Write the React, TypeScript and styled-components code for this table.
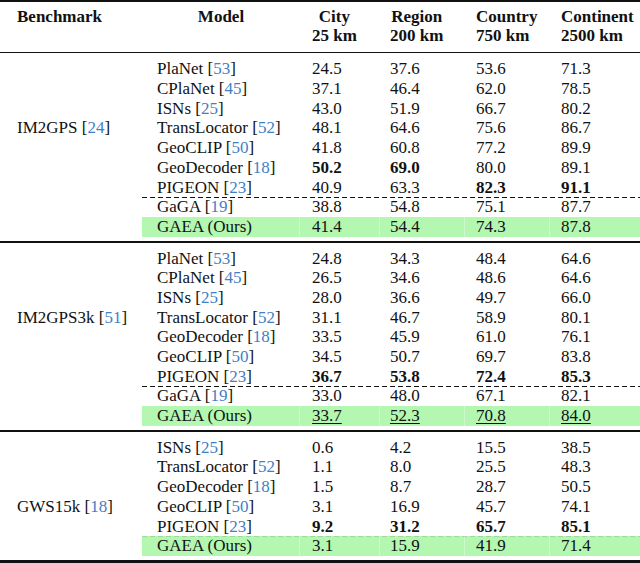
import React from 'react';
import styled, { createGlobalStyle } from 'styled-components';

const GlobalStyle = createGlobalStyle`
  body {
    margin: 0;
    background: #ffffff;
  }
`;

interface ModelRow {
  model: string;
  cite?: string;
  values: string[];
  bold?: boolean[];
  underline?: boolean;
  highlight?: boolean;
  dashed?: boolean;
  faintDash?: boolean;
}

interface Section {
  name: string;
  cite: string;
  labelRow: number;
  rows: ModelRow[];
}

const ALL = [true, true, true, true];
const FIRST_TWO = [true, true, false, false];
const LAST_TWO = [false, false, true, true];

const sections: Section[] = [
  {
    name: 'IM2GPS',
    cite: '24',
    labelRow: 3,
    rows: [
      { model: 'PlaNet', cite: '53', values: ['24.5', '37.6', '53.6', '71.3'] },
      { model: 'CPlaNet', cite: '45', values: ['37.1', '46.4', '62.0', '78.5'] },
      { model: 'ISNs', cite: '25', values: ['43.0', '51.9', '66.7', '80.2'] },
      { model: 'TransLocator', cite: '52', values: ['48.1', '64.6', '75.6', '86.7'] },
      { model: 'GeoCLIP', cite: '50', values: ['41.8', '60.8', '77.2', '89.9'] },
      { model: 'GeoDecoder', cite: '18', values: ['50.2', '69.0', '80.0', '89.1'], bold: FIRST_TWO },
      { model: 'PIGEON', cite: '23', values: ['40.9', '63.3', '82.3', '91.1'], bold: LAST_TWO },
      { model: 'GaGA', cite: '19', values: ['38.8', '54.8', '75.1', '87.7'], dashed: true },
      { model: 'GAEA (Ours)', values: ['41.4', '54.4', '74.3', '87.8'], highlight: true },
    ],
  },
  {
    name: 'IM2GPS3k',
    cite: '51',
    labelRow: 3,
    rows: [
      { model: 'PlaNet', cite: '53', values: ['24.8', '34.3', '48.4', '64.6'] },
      { model: 'CPlaNet', cite: '45', values: ['26.5', '34.6', '48.6', '64.6'] },
      { model: 'ISNs', cite: '25', values: ['28.0', '36.6', '49.7', '66.0'] },
      { model: 'TransLocator', cite: '52', values: ['31.1', '46.7', '58.9', '80.1'] },
      { model: 'GeoDecoder', cite: '18', values: ['33.5', '45.9', '61.0', '76.1'] },
      { model: 'GeoCLIP', cite: '50', values: ['34.5', '50.7', '69.7', '83.8'] },
      { model: 'PIGEON', cite: '23', values: ['36.7', '53.8', '72.4', '85.3'], bold: ALL },
      { model: 'GaGA', cite: '19', values: ['33.0', '48.0', '67.1', '82.1'], dashed: true },
      { model: 'GAEA (Ours)', values: ['33.7', '52.3', '70.8', '84.0'], highlight: true, underline: true },
    ],
  },
  {
    name: 'GWS15k',
    cite: '18',
    labelRow: 3,
    rows: [
      { model: 'ISNs', cite: '25', values: ['0.6', '4.2', '15.5', '38.5'] },
      { model: 'TransLocator', cite: '52', values: ['1.1', '8.0', '25.5', '48.3'] },
      { model: 'GeoDecoder', cite: '18', values: ['1.5', '8.7', '28.7', '50.5'] },
      { model: 'GeoCLIP', cite: '50', values: ['3.1', '16.9', '45.7', '74.1'] },
      { model: 'PIGEON', cite: '23', values: ['9.2', '31.2', '65.7', '85.1'], bold: ALL },
      { model: 'GAEA (Ours)', values: ['3.1', '15.9', '41.9', '71.4'], highlight: true, faintDash: true },
    ],
  },
];

// header of the four accuracy columns
const columns = [
  { title: 'City', unit: '25 km', pad: 12, align: 'center' },
  { title: 'Region', unit: '200 km', pad: 10, align: 'center' },
  { title: 'Country', unit: '750 km', pad: 11, align: 'flex-start' },
  { title: 'Continent', unit: '2500 km', pad: 11, align: 'flex-start' },
];

const COLS = '158px 80px 85px 85px 90px';

const Table = styled.div`
  width: 640px;
  font-family: 'Liberation Serif', Tinos, 'Times New Roman', 'DejaVu Serif', serif;
  font-size: 17px;
  line-height: 19.7px;
  color: #111;
`;

const Rule = styled.div<{ $h: number }>`
  height: ${(p) => p.$h}px;
  background: #111;
`;

const HeaderRow = styled.div`
  display: grid;
  grid-template-columns: 142px ${COLS};
  padding: 5px 0 6px;
  font-weight: 700;
`;

const HeadBench = styled.div`
  padding-left: 17px;
`;

const HeadModel = styled.div`
  text-align: center;
`;

const HeadNum = styled.div<{ $pad: number; $align: string }>`
  padding-left: ${(p) => p.$pad}px;
  display: flex;
  flex-direction: column;
  align-items: ${(p) => p.$align};
  width: max-content;
`;

const SectionBody = styled.div`
  padding: 6px 0 4px;
`;

const Row = styled.div`
  display: grid;
  grid-template-columns: 142px 1fr;
  height: 19.7px;
`;

const BenchCell = styled.div`
  padding-left: 17px;
  white-space: nowrap;
`;

const Cells = styled.div<{ $highlight?: boolean; $dashed?: boolean; $faint?: boolean }>`
  position: relative;
  display: grid;
  grid-template-columns: ${COLS};
  background: ${(p) => (p.$highlight ? '#b3f7b1' : 'transparent')};

  &::before {
    content: '';
    display: ${(p) => (p.$dashed || p.$faint ? 'block' : 'none')};
    position: absolute;
    left: 0;
    right: 0;
    top: 0;
    height: 1px;
    background: repeating-linear-gradient(
      to right,
      ${(p) => (p.$faint ? 'rgba(0, 0, 0, 0.12)' : '#111')} 0 5px,
      transparent 5px 8px
    );
  }
`;

const ModelCell = styled.div`
  padding-left: 15px;
  white-space: nowrap;
`;

const NumCell = styled.div<{ $pad: number; $bold?: boolean; $underline?: boolean; $highlight?: boolean }>`
  padding-left: ${(p) => p.$pad}px;
  font-weight: ${(p) => (p.$bold ? 700 : 400)};
  border-left: 1px solid ${(p) => (p.$highlight ? 'rgba(255, 255, 255, 0.35)' : 'transparent')};
  margin-left: -1px;

  span {
    text-decoration: ${(p) => (p.$underline ? 'underline' : 'none')};
    text-decoration-thickness: 1px;
    text-underline-offset: 2px;
  }
`;

const Cite = styled.span`
  color: #3f80c6;
`;

const Ref = ({ n }: { n: string }) => (
  <>
    {' '}[<Cite>{n}</Cite>]
  </>
);

const App = () => {
  return (
    <>
      <GlobalStyle />
      <Table>
        <Rule $h={1.5} />
        <HeaderRow>
          <HeadBench>Benchmark</HeadBench>
          <HeadModel>Model</HeadModel>
          {columns.map((c) => (
            <HeadNum key={c.title} $pad={c.pad} $align={c.align}>
              <span>{c.title}</span>
              <span>{c.unit}</span>
            </HeadNum>
          ))}
        </HeaderRow>
        <Rule $h={1.5} />
        {sections.map((s, si) => (
          <React.Fragment key={s.name}>
            <SectionBody>
              {s.rows.map((r, ri) => (
                <Row key={r.model}>
                  <BenchCell>
                    {ri === s.labelRow && (
                      <>
                        {s.name}
                        <Ref n={s.cite} />
                      </>
                    )}
                  </BenchCell>
                  <Cells $highlight={r.highlight} $dashed={r.dashed} $faint={r.faintDash}>
                    <ModelCell>
                      {r.model}
                      {r.cite && <Ref n={r.cite} />}
                    </ModelCell>
                    {r.values.map((v, vi) => (
                      <NumCell
                        key={vi}
                        $pad={columns[vi].pad}
                        $bold={r.bold?.[vi]}
                        $underline={r.underline}
                        $highlight={r.highlight}
                      >
                        <span>{v}</span>
                      </NumCell>
                    ))}
                  </Cells>
                </Row>
              ))}
            </SectionBody>
            <Rule $h={si === sections.length - 1 ? 3 : 2} />
          </React.Fragment>
        ))}
      </Table>
    </>
  );
};

export default App;
